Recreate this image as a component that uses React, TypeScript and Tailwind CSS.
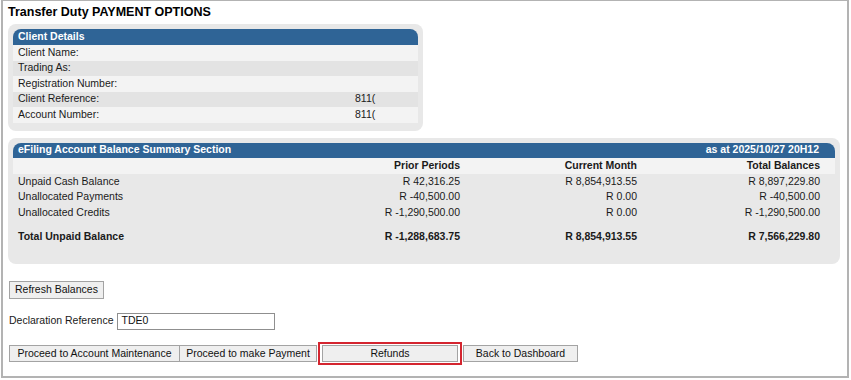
import React from "react";

const blue = "bg-[#2f6496]";

function ClientRow({ label, value, light }: { label: string; value?: string; light: boolean }) {
  return (
    <div className={`flex h-[15.5px] items-center pl-[5px] ${light ? "bg-[#f3f3f3]" : "bg-[#e3e3e3]"}`}>
      <span className="w-[337px]">{label}</span>
      {value && <span>{value}</span>}
    </div>
  );
}

function BalRow({ cells, bold }: { cells: string[]; bold?: boolean }) {
  return (
    <div className={`grid h-[15.5px] grid-cols-[277px_165px_177px_183px] items-center ${bold ? "font-bold" : ""}`}>
      <span>{cells[0]}</span>
      <span className="text-right">{cells[1]}</span>
      <span className="text-right">{cells[2]}</span>
      <span className="text-right">{cells[3]}</span>
    </div>
  );
}

const btn = "h-[17px] border border-[#a3a3a3] bg-[#efefef] leading-[15px] text-[#111]";

export default function App() {
  return (
    <div className="h-[380px] w-[851px] bg-white text-[10.5px] text-[#1a1a1a]" style={{ fontFamily: '"Liberation Sans", Arial, sans-serif' }}>
      <div className="ml-[1px] h-[378px] w-[848px] border-2 border-t border-[#b3b3b3] pl-[5px]">
        <div className="pt-[3px] text-[12.5px] font-bold leading-[17px] text-black">Transfer Duty PAYMENT OPTIONS</div>

        <div className="mt-[3px] w-[415px] rounded-[8px] bg-[#e8e8e8] px-[5px] pb-[8px] pt-[5px]">
          <div className={`${blue} flex h-[16px] items-center rounded-t-[8px] pl-[5px] font-bold text-white`}>Client Details</div>
          <ClientRow label="Client Name:" light />
          <ClientRow label="Trading As:" light={false} />
          <ClientRow label="Registration Number:" light />
          <ClientRow label="Client Reference:" value="811(" light={false} />
          <ClientRow label="Account Number:" value="811(" light />
        </div>

        <div className="mt-[7px] w-[832px] rounded-[8px] bg-[#e8e8e8] px-[5px] pb-[19px] pt-[5px]">
          <div className={`${blue} flex h-[15px] items-center justify-between rounded-t-[8px] pl-[5px] pr-[16px] font-bold text-white`}>
            <span>eFiling Account Balance Summary Section</span>
            <span>as at 2025/10/27 20H12</span>
          </div>
          <div className="bg-[#f3f3f3] pl-[5px]">
            <div className="grid h-[16px] grid-cols-[277px_165px_177px_183px] items-center font-bold">
              <span></span>
              <span className="text-right">Prior Periods</span>
              <span className="text-right">Current Month</span>
              <span className="text-right">Total Balances</span>
            </div>
          </div>
          <div className="pl-[5px]">
            <BalRow cells={["Unpaid Cash Balance", "R 42,316.25", "R 8,854,913.55", "R 8,897,229.80"]} />
            <BalRow cells={["Unallocated Payments", "R -40,500.00", "R 0.00", "R -40,500.00"]} />
            <BalRow cells={["Unallocated Credits", "R -1,290,500.00", "R 0.00", "R -1,290,500.00"]} />
            <div className="h-[9px]" />
            <BalRow bold cells={["Total Unpaid Balance", "R -1,288,683.75", "R 8,854,913.55", "R 7,566,229.80"]} />
          </div>
        </div>

        <div className="ml-[1px] mt-[17px]">
          <button className={`${btn} h-[18px] px-[5px]`}>Refresh Balances</button>
        </div>

        <div className="ml-[1px] mt-[14px] flex items-center gap-[4px]">
          <span>Declaration Reference</span>
          <div className="flex h-[17px] w-[158px] items-center border border-[#8f8f8f] bg-white pl-[3px] text-[#111]">TDE0</div>
        </div>

        <div className="ml-[1px] mt-[12px] flex items-center">
          <button className={`${btn} w-[171px]`}>Proceed to Account Maintenance</button>
          <button className={`${btn} -ml-[1px] w-[138px]`}>Proceed to make Payment</button>
          <div className="ml-[1px] border-2 border-[#d4252f] px-[2px] py-[1px]">
            <button className={`${btn} block w-[136px]`}>Refunds</button>
          </div>
          <button className={`${btn} ml-[1px] w-[115px]`}>Back to Dashboard</button>
        </div>
      </div>
    </div>
  );
}
